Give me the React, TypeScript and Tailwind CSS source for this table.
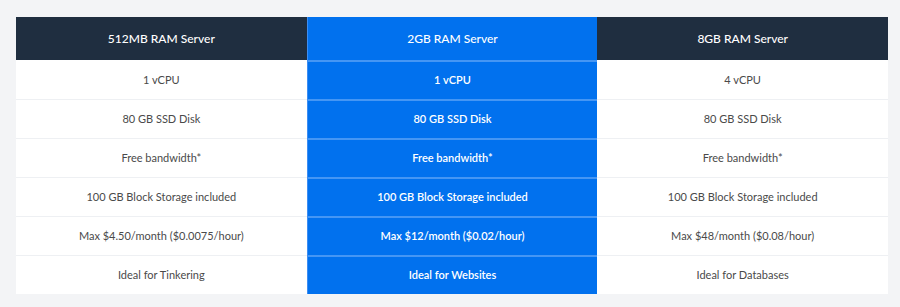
import React from "react";

const cols = [
  {
    title: "512MB RAM Server",
    rows: ["1 vCPU", "80 GB SSD Disk", "Free bandwidth*", "100 GB Block Storage included", "Max $4.50/month ($0.0075/hour)", "Ideal for Tinkering"],
    hi: false,
  },
  {
    title: "2GB RAM Server",
    rows: ["1 vCPU", "80 GB SSD Disk", "Free bandwidth*", "100 GB Block Storage included", "Max $12/month ($0.02/hour)", "Ideal for Websites"],
    hi: true,
  },
  {
    title: "8GB RAM Server",
    rows: ["4 vCPU", "80 GB SSD Disk", "Free bandwidth*", "100 GB Block Storage included", "Max $48/month ($0.08/hour)", "Ideal for Databases"],
    hi: false,
  },
];

export default function App() {
  return (
    <div
      className="w-[900px] h-[307px] bg-[#f3f4f6] pt-[17px] pl-[16px]"
      style={{ fontFamily: "Lato, 'Open Sans', sans-serif" }}
    >
      <div className="w-[872px] grid grid-cols-3">
        {cols.map((c) => (
          <div key={c.title} className={c.hi ? "bg-[#0171ee] border-l border-[#3d8ef3]" : "bg-white"}>
            <div
              className={
                "h-[43px] flex items-center justify-center text-[12px] font-medium text-white " +
                (c.hi ? "bg-[#0171ee]" : "bg-[#1f2e40]")
              }
            >
              {c.title}
            </div>
            {c.rows.map((r, i) => (
              <div
                key={i}
                className={
                  "flex items-center justify-center text-[11px] " +
                  (c.hi
                    ? "text-white font-semibold border-t-2 border-[#4596f4] h-[39px]"
                    : "text-[#4a4a4a] h-[39px] " + (i === 0 ? "border-t border-transparent" : "border-t border-[#eef0f3]"))
                }
              >
                {r}
              </div>
            ))}
          </div>
        ))}
      </div>
    </div>
  );
}
